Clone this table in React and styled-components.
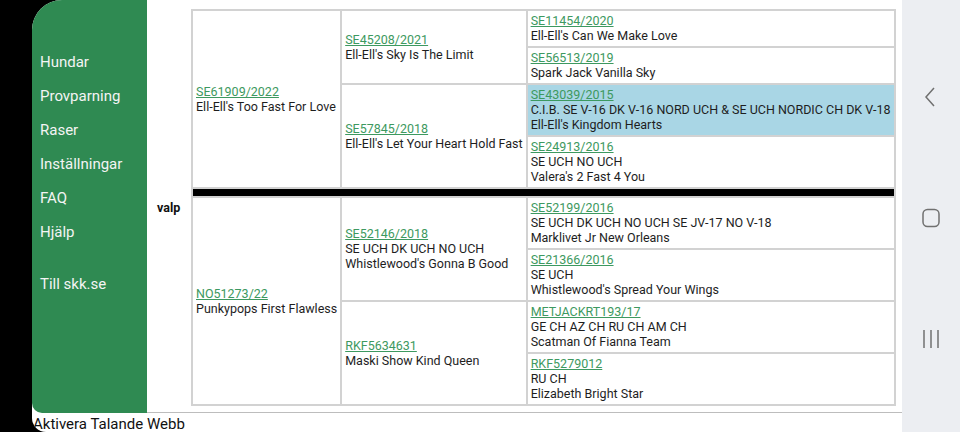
import React from 'react';
import styled, { createGlobalStyle } from 'styled-components';

const GlobalStyle = createGlobalStyle`
  html, body {
    margin: 0;
    padding: 0;
    background: #000;
    overflow: hidden;
  }
  body {
    font-family: Roboto, "Liberation Sans", sans-serif;
  }
`;

const pedigree = [
  {
    reg: 'SE61909/2022',
    name: "Ell-Ell's Too Fast For Love",
    parents: [
      {
        reg: 'SE45208/2021',
        name: "Ell-Ell's Sky Is The Limit",
        parents: [
          { reg: 'SE11454/2020', name: "Ell-Ell's Can We Make Love" },
          { reg: 'SE56513/2019', name: 'Spark Jack Vanilla Sky' },
        ],
      },
      {
        reg: 'SE57845/2018',
        name: "Ell-Ell's Let Your Heart Hold Fast",
        parents: [
          {
            reg: 'SE43039/2015',
            titles: 'C.I.B. SE V-16 DK V-16 NORD UCH & SE UCH NORDIC CH DK V-18',
            name: "Ell-Ell's Kingdom Hearts",
            highlight: true,
          },
          { reg: 'SE24913/2016', titles: 'SE UCH NO UCH', name: "Valera's 2 Fast 4 You" },
        ],
      },
    ],
  },
  {
    reg: 'NO51273/22',
    name: 'Punkypops First Flawless',
    parents: [
      {
        reg: 'SE52146/2018',
        titles: 'SE UCH DK UCH NO UCH',
        name: "Whistlewood's Gonna B Good",
        parents: [
          { reg: 'SE52199/2016', titles: 'SE UCH DK UCH NO UCH SE JV-17 NO V-18', name: 'Marklivet Jr New Orleans' },
          { reg: 'SE21366/2016', titles: 'SE UCH', name: "Whistlewood's Spread Your Wings" },
        ],
      },
      {
        reg: 'RKF5634631',
        name: 'Maski Show Kind Queen',
        parents: [
          { reg: 'METJACKRT193/17', titles: 'GE CH AZ CH RU CH AM CH', name: 'Scatman Of Fianna Team' },
          { reg: 'RKF5279012', titles: 'RU CH', name: 'Elizabeth Bright Star' },
        ],
      },
    ],
  },
];

const menu = ['Hundar', 'Provparning', 'Raser', 'Inställningar', 'FAQ', 'Hjälp'];

const Screen = styled.div`
  display: flex;
  height: 432px;
  margin-left: 32px;
`;

const Main = styled.div`
  display: flex;
  flex-direction: column;
  width: 870px;
`;

const Content = styled.div`
  display: flex;
  height: 413px;
  background: #fff;
  border-top-left-radius: 30px;
`;

const Sidebar = styled.nav`
  width: 115px;
  background: #2f8a52;
  border-top-left-radius: 30px;
  border-bottom-left-radius: 10px;
  padding-top: 45px;
  box-sizing: border-box;
  display: flex;
  flex-direction: column;
`;

const MenuItem = styled.a`
  color: #f4f4f4;
  font-size: 15px;
  line-height: 34px;
  padding-left: 8px;
  text-decoration: none;
  margin-top: ${(p) => (p.$gap ? '18px' : '0')};
`;

const Page = styled.div`
  flex: 1;
  display: flex;
  align-items: flex-start;
  border-bottom: 1px solid #bdbdbd;
  padding: 9px 0 0;
  box-sizing: border-box;
`;

const Valp = styled.div`
  width: 44px;
  align-self: center;
  margin-top: -6px;
  padding-left: 10px;
  box-sizing: border-box;
  font-size: 12.5px;
  font-weight: bold;
  color: #111;
`;

const Table = styled.table`
  width: 702px;
  border-collapse: collapse;
  border: 2px solid #d2d2d2;
  font-size: 12.5px;
  line-height: 15px;
  color: #1e1e1e;
`;

const Cell = styled.td`
  border: 2px solid #d2d2d2;
  padding: 2px 3px 3px 3px;
  vertical-align: ${(p) => (p.$top ? 'top' : 'middle')};
  width: ${(p) => p.$w || 'auto'};
  background: ${(p) => (p.$highlight ? '#a9d6e5' : '#fff')};
  white-space: nowrap;
`;

const Divider = styled.td`
  height: 7px;
  padding: 0;
  background: #000;
  border: 1px solid #000;
`;

const RegLink = styled.a`
  color: #3d9960;
  text-decoration: underline;
  display: block;
`;

const Line = styled.div``;

const Footer = styled.div`
  height: 19px;
  overflow: hidden;
  background: #fff;
  font-size: 15px;
  line-height: 19px;
  padding-top: 2px;
  box-sizing: border-box;
  color: #111;
  padding-left: 1px;
  border-bottom-left-radius: 14px;
`;

const NavBar = styled.div`
  width: 58px;
  background: #eceef2;
  display: flex;
  flex-direction: column;
  align-items: center;
  justify-content: space-between;
  padding: 86px 0 82px;
  box-sizing: border-box;
`;

const Dog = ({ dog }) => (
  <>
    <RegLink href="#">{dog.reg}</RegLink>
    {dog.titles && <Line>{dog.titles}</Line>}
    <Line>{dog.name}</Line>
  </>
);

const Half = ({ parent }) => {
  const rows = [];
  parent.parents.forEach((gp, gi) => {
    gp.parents.forEach((ggp, i) => {
      rows.push(
        <tr key={`${gi}-${i}`}>
          {gi === 0 && i === 0 && (
            <Cell rowSpan={4} $w="143px">
              <Dog dog={parent} />
            </Cell>
          )}
          {i === 0 && (
            <Cell rowSpan={2} $w="179px">
              <Dog dog={gp} />
            </Cell>
          )}
          <Cell $top $highlight={ggp.highlight}>
            <Dog dog={ggp} />
          </Cell>
        </tr>
      );
    });
  });
  return rows;
};

const BackIcon = () => (
  <svg width="14" height="22" viewBox="0 0 14 22">
    <polyline points="10,2 2,11 10,20" fill="none" stroke="#707070" strokeWidth="1.5" />
  </svg>
);

const HomeIcon = () => (
  <svg width="20" height="20" viewBox="0 0 20 20">
    <rect x="2" y="1.5" width="16" height="17" rx="4.5" fill="none" stroke="#707070" strokeWidth="1.5" />
  </svg>
);

const RecentsIcon = () => (
  <svg width="20" height="22" viewBox="0 0 20 22">
    <line x1="3" y1="2" x2="3" y2="20" stroke="#707070" strokeWidth="1.5" />
    <line x1="10" y1="2" x2="10" y2="20" stroke="#707070" strokeWidth="1.5" />
    <line x1="17" y1="2" x2="17" y2="20" stroke="#707070" strokeWidth="1.5" />
  </svg>
);

const App = () => (
  <>
    <GlobalStyle />
    <Screen>
      <Main>
        <Content>
          <Sidebar>
            {menu.map((m) => (
              <MenuItem key={m} href="#">{m}</MenuItem>
            ))}
            <MenuItem href="#" $gap>Till skk.se</MenuItem>
          </Sidebar>
          <Page>
            <Valp>valp</Valp>
            <Table>
              <tbody>
                <Half parent={pedigree[0]} />
                <tr>
                  <Divider colSpan={3} />
                </tr>
                <Half parent={pedigree[1]} />
              </tbody>
            </Table>
          </Page>
        </Content>
        <Footer>Aktivera Talande Webb</Footer>
      </Main>
      <NavBar>
        <BackIcon />
        <HomeIcon />
        <RecentsIcon />
      </NavBar>
    </Screen>
  </>
);

export default App;
